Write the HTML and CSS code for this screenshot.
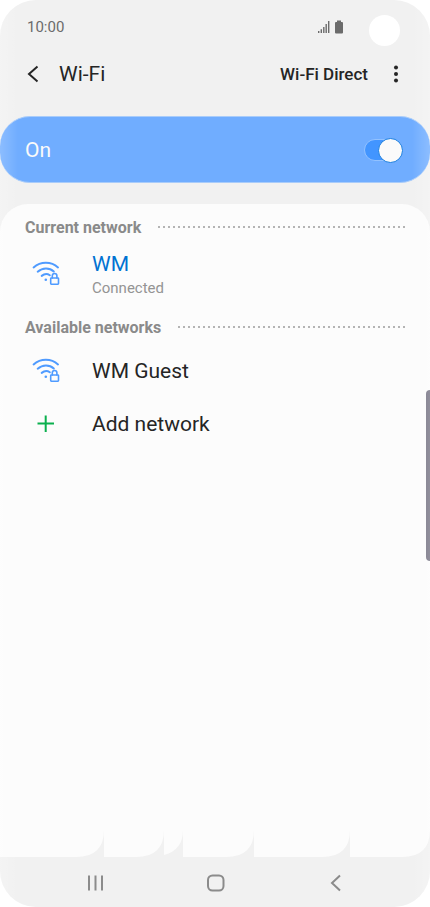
FILE: index.html
```html
<!DOCTYPE html>
<html lang="en">
<head>
<meta charset="utf-8">
<meta name="viewport" content="width=device-width, initial-scale=1">
<title>Wi-Fi</title>
<link rel="stylesheet" href="styles.css">
</head>
<body>
<svg class="defs" aria-hidden="true">
  <symbol id="wifi-lock" viewBox="0 0 28 28">
    <g fill="none" stroke="currentColor" stroke-width="2" stroke-linecap="round">
      <path d="M1.6 7.4C8.6 1.3 19.2 1.3 26 7.4"/>
      <path d="M5.7 11.7C10.6 7.4 17.4 7.4 21.8 11.5"/>
      <path d="M9.7 15.9C12.4 13.7 15.6 13.7 17.8 15.3"/>
      <path stroke-width="1.6" d="M20.3 18v-2.2a2.3 2.3 0 0 1 4.6 0V18"/>
      <rect stroke-width="1.6" x="18.7" y="18" width="7.8" height="6.2" rx="0.6"/>
    </g>
    <circle cx="13.8" cy="19.8" r="1.3" fill="currentColor"/>
  </symbol>
</svg>
<div class="phone">
  <div class="status">
    <span class="time">10:00</span>
    <svg class="status-icons" viewBox="0 0 26 14" aria-hidden="true">
      <path d="M0 11h1.4v2H0zM2.6 9.300h1.400V13H2.600zM5.100 7h1.400v6H5.100zM7.500 4h1.400v9H7.500zM10 1h1.400v12H10z"/>
      <path d="M19 .5h4v1.500h1q1 0 1 1V12.500q0 1-1 1h-6q-1 0-1-1V3q0-1 1-1h1z"/>
    </svg>
    <span class="camera"></span>
  </div>
  <header class="header">
    <button class="icon-button" aria-label="Back">
      <svg class="back" viewBox="0 0 12 18" aria-hidden="true"><path d="M10.500 1.500L2 9l8.500 7.500"/></svg>
    </button>
    <h1 class="title">Wi-Fi</h1>
    <button class="direct">Wi-Fi Direct</button>
    <button class="icon-button" aria-label="More options">
      <svg class="more" viewBox="0 0 6 18" aria-hidden="true"><circle cx="3" cy="2.500" r="2"/><circle cx="3" cy="9" r="2"/><circle cx="3" cy="15.500" r="2"/></svg>
    </button>
  </header>
  <label class="power">
    <span>On</span>
    <input class="switch" type="checkbox" role="switch" checked>
  </label>
  <main class="panel">
    <section>
      <h2 class="heading">Current network</h2>
      <button class="row current">
        <svg class="row-icon"><use href="#wifi-lock"/></svg>
        <span class="names"><span class="name">WM</span><span class="state">Connected</span></span>
      </button>
    </section>
    <section>
      <h2 class="heading">Available networks</h2>
      <div class="list">
        <button class="row">
          <svg class="row-icon"><use href="#wifi-lock"/></svg>
          <span class="name">WM Guest</span>
        </button>
        <button class="row">
          <svg class="row-icon add" viewBox="0 0 28 28" aria-hidden="true"><path d="M5.500 13.500h16.500M13.700 5.500v16.500"/></svg>
          <span class="name">Add network</span>
        </button>
      </div>
    </section>
  </main>
  <svg class="scallops" viewBox="0 0 430 27" preserveAspectRatio="none" aria-hidden="true">
    <path d="M0 0H104Q104 27 76 27H0zM104 0h60q0 27-28 27h-32zM164 0h19q0 20-19 25zM183 0h71q0 27-28 27h-43zM254 0h96q0 27-28 27h-68zM350 0h80q0 27-28 27h-52z"/>
  </svg>
  <nav class="nav">
    <button class="nav-button" aria-label="Recent apps"><svg viewBox="0 0 18 18" aria-hidden="true"><path d="M2 1.500v15M8.500 1.500v15M15 1.500v15"/></svg></button>
    <button class="nav-button" aria-label="Home"><svg viewBox="0 0 18 18" aria-hidden="true"><rect x="1" y="1.500" width="15.500" height="15" rx="4.500"/></svg></button>
    <button class="nav-button" aria-label="Back"><svg viewBox="0 0 18 18" aria-hidden="true"><path d="M13 1.500L5 9l8 7.500"/></svg></button>
  </nav>
  <span class="edge-handle"></span>
</div>
</body>
</html>
```
FILE: styles.css
```css
* { box-sizing: border-box; }

body {
  margin: 0;
  background: #fff;
  font-family: Roboto, "Liberation Sans", sans-serif;
  color: #252525;
}

button {
  border: 0;
  padding: 0;
  background: none;
  color: inherit;
  font: inherit;
  text-align: left;
}

svg { display: block; }

.defs {
  position: absolute;
  width: 0;
  height: 0;
}

.phone {
  position: relative;
  display: flex;
  flex-direction: column;
  min-height: 100vh;
  border-radius: 36px;
  overflow: hidden;
  background: #f1f1f1;
}

/* soft light along the curved screen edges */
.phone::after {
  content: "";
  position: absolute;
  inset: 0;
  pointer-events: none;
  background:
    linear-gradient(to right, rgba(255, 255, 255, 0.2), transparent 18px),
    linear-gradient(to left, rgba(255, 255, 255, 0.2), transparent 18px);
}

.status {
  display: flex;
  align-items: center;
  gap: 11px;
  height: 54px;
  padding: 0 31px 0 27px;
}

.time {
  flex: 1;
  font-size: 15px;
  color: #6b6b6b;
}

.status-icons {
  width: 26px;
  height: 14px;
  margin-right: 14px;
  fill: #6b6b6b;
}

.camera {
  width: 31px;
  height: 31px;
  margin: 6px -1px 0 0;
  border-radius: 50%;
  background: #fff;
}

.header {
  display: flex;
  align-items: center;
  height: 40px;
  margin-bottom: 22px;
  padding: 0 24px 0 23px;
}

.icon-button {
  display: flex;
  justify-content: center;
  width: 20px;
}

.back {
  width: 12px;
  height: 18px;
  fill: none;
  stroke: #252525;
  stroke-width: 2;
}

.more {
  width: 6px;
  height: 18px;
  fill: #252525;
}

.title {
  flex: 1;
  margin: 0 0 0 16px;
  font-size: 21px;
  font-weight: 400;
}

.direct {
  margin-right: 18px;
  font-size: 17px;
  font-weight: 500;
}

.power {
  display: flex;
  align-items: center;
  justify-content: space-between;
  height: 67px;
  margin-bottom: 21px;
  padding: 0 28px 0 25px;
  border: solid #a9ccfa;
  border-width: 1px 0;
  border-radius: 30px;
  background: #70adff;
  color: #fafafa;
  font-size: 21px;
}

.switch {
  appearance: none;
  position: relative;
  width: 38px;
  height: 22px;
  margin: 0;
  border: 1px solid #93c2ff;
  border-radius: 11px;
  background: #4295ff;
}

.switch::after {
  content: "";
  position: absolute;
  top: -2px;
  right: -2px;
  width: 23px;
  height: 23px;
  border: 1px solid #1b7fe0;
  border-radius: 50%;
  background: #fafafa;
}

.panel {
  flex: 1;
  padding: 11px 23px 0 25px;
  border-radius: 28px 28px 0 0;
  background: #fcfcfc;
}

.heading {
  display: flex;
  align-items: center;
  gap: 17px;
  height: 24px;
  margin: 0;
  font-size: 16px;
  font-weight: 700;
  color: #8a8a8a;
}

.heading::after {
  content: "";
  flex: 1;
  height: 2px;
  background: repeating-linear-gradient(to right, #b4b4b4 0 2px, transparent 2px 5px);
}

.row {
  display: flex;
  align-items: center;
  gap: 32px;
  width: 100%;
  height: 53px;
  padding-left: 7px;
}

.current {
  align-items: flex-start;
  height: 76px;
  padding-top: 13px;
}

.row-icon {
  width: 28px;
  height: 28px;
  color: #4f9bff;
}

.current .row-icon { margin-top: 8px; }

.add {
  fill: none;
  stroke: #0bb04e;
  stroke-width: 2;
}

.names {
  display: flex;
  flex-direction: column;
}

.name {
  font-size: 21px;
  line-height: 24px;
}

.current .name { color: #0072d2; }

.state {
  font-size: 15px;
  line-height: 24px;
  color: #949494;
}

.list { padding-top: 5px; }

.scallops {
  width: 100%;
  height: 27px;
  fill: #fcfcfc;
}

.nav {
  display: flex;
  justify-content: center;
  height: 50px;
  padding: 2px 34px 0 36px;
}

.nav-button {
  display: flex;
  flex: 1;
  align-items: center;
  justify-content: center;
}

.nav-button svg {
  width: 18px;
  height: 18px;
  fill: none;
  stroke: #8b8b8b;
  stroke-width: 2;
}

.edge-handle {
  position: absolute;
  top: 43%;
  right: 0;
  width: 4px;
  height: 171px;
  border-radius: 4px 0 0 4px;
  background: #757383;
}
```
